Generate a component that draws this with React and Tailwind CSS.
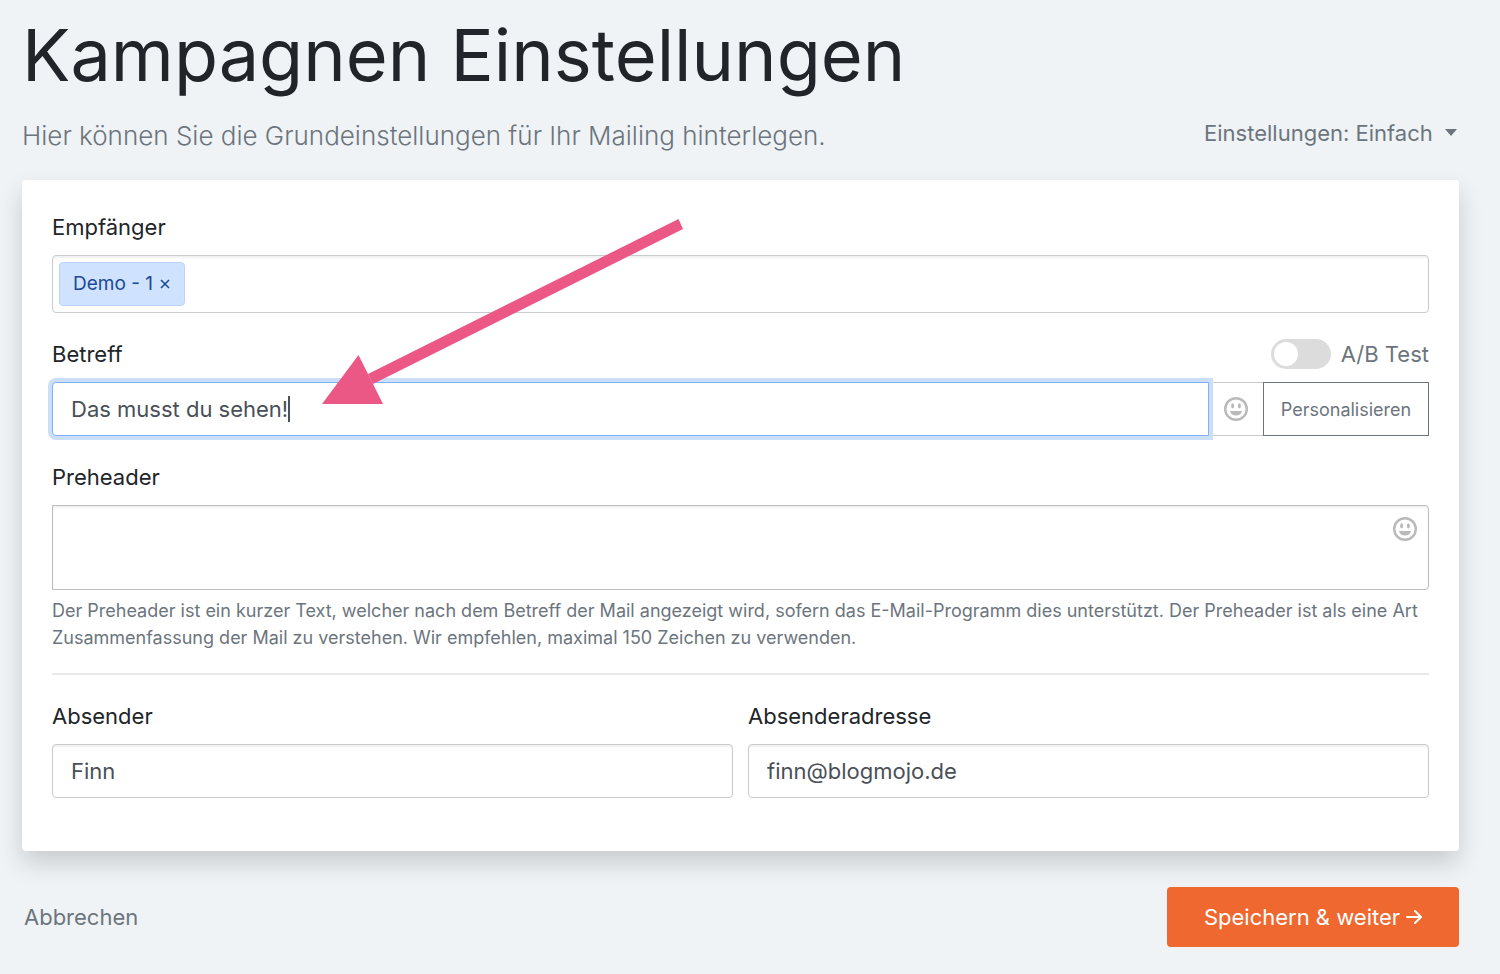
import { useState } from 'react';

const inputClass =
  'block w-full h-[54px] rounded-[4px] border border-[#c9cbce] bg-white px-[18px] text-[22px] text-[#495057] shadow-[inset_0_2px_2px_rgba(0,0,0,0.06)] outline-none';
const labelClass = 'block text-[22px] leading-[34px] text-[#212529]';

function Smiley() {
  return (
    <svg viewBox="0 0 24 24" className="w-6 h-6" fill="none" aria-hidden="true">
      <circle cx="12" cy="12" r="10.8" stroke="#b9b9b9" strokeWidth="2.4" />
      <ellipse cx="8.6" cy="8.8" rx="1.5" ry="2.6" fill="#b9b9b9" />
      <ellipse cx="15.4" cy="8.8" rx="1.5" ry="2.6" fill="#b9b9b9" />
      <path d="M6 14h12c-.6 2.900-3 4.600-6 4.600S6.600 16.900 6 14z" fill="#b9b9b9" />
    </svg>
  );
}

function Arrow() {
  return (
    <svg viewBox="0 0 362 187" className="absolute left-[300px] top-[38px] z-20 w-[362px] h-[187px] pointer-events-none" fill="#eb5886" aria-hidden="true">
      <polygon points="356.5,1 361,11 51,166 46,156" />
      <polygon points="0,186 36.5,137 61,186" />
    </svg>
  );
}

export default function App() {
  const [subject, setSubject] = useState('Das musst du sehen!');
  const [preheader, setPreheader] = useState('');
  const [abTest, setAbTest] = useState(false);

  return (
    <div className="min-h-screen bg-[#eff3f6] pt-[6px] pb-[27px] pl-[22px] pr-[41px] font-['Inter',sans-serif]">
      <h1 className="text-[72px] leading-[98px] font-normal text-[#212529]">Kampagnen Einstellungen</h1>

      <div className="flex items-start justify-between mt-3 mb-6">
        <p className="text-[26px] leading-10 font-light text-[#6c757d]">
          Hier können Sie die Grundeinstellungen für Ihr Mailing hinterlegen.
        </p>
        <div className="relative">
          <select aria-label="Einstellungen" className="appearance-none bg-transparent pr-[26px] text-[22px] leading-[34px] text-[#6c757d] outline-none">
            <option>Einstellungen: Einfach</option>
          </select>
          <svg viewBox="0 0 12 7" className="absolute right-[2px] top-[13px] w-3 h-[7px] pointer-events-none" fill="#6c757d" aria-hidden="true">
            <path d="M0 0h12L6 7z" />
          </svg>
        </div>
      </div>

      <form>
        <div className="relative rounded-[4px] bg-white px-[30px] pt-[30px] pb-[53px] shadow-[0_12px_24px_rgba(0,0,0,0.16)]">
          {/* Recipients */}
          <div className="mb-6">
            <label htmlFor="recipients" className={labelClass}>Empfänger</label>
            <div className="mt-[11px] flex h-[58px] items-center rounded-[4px] border border-[#c9cbce] px-[6px] shadow-[inset_0_2px_2px_rgba(0,0,0,0.06)]">
              <span className="flex h-11 items-center gap-[6px] rounded-[4px] border border-[#b8d4fb] bg-[#cfe2ff] px-[13px] text-[19px] text-[#1b4a94]">
                Demo - 1
                <button type="button" aria-label="Demo - 1 entfernen">
                  <svg viewBox="0 0 12 12" className="w-3 h-3" stroke="#1b4a94" strokeWidth="1.6" aria-hidden="true">
                    <path d="M2 2l8 8M10 2l-8 8" />
                  </svg>
                </button>
              </span>
              <input id="recipients" type="text" className="flex-1 min-w-0 px-2 text-[22px] outline-none" />
            </div>
          </div>

          {/* Subject */}
          <div className="mb-6">
            <div className="flex items-center justify-between">
              <label htmlFor="subject" className={labelClass}>Betreff</label>
              <div className="flex items-center gap-[10px]">
                <input
                  id="abtest"
                  type="checkbox"
                  role="switch"
                  checked={abTest}
                  onChange={(e) => setAbTest(e.target.checked)}
                  className="appearance-none w-[60px] h-[30px] rounded-full bg-[#dcdcdc] p-[3px] before:block before:w-6 before:h-6 before:rounded-full before:bg-white checked:bg-[#ee682f] checked:before:ml-[30px]"
                />
                <label htmlFor="abtest" className="text-[22px] leading-[34px] text-[#6c757d]">A/B Test</label>
              </div>
            </div>
            <div className="mt-[11px] flex h-[54px]">
              <div className="relative flex-1 z-10">
                <input
                  id="subject"
                  type="text"
                  value={subject}
                  onChange={(e) => setSubject(e.target.value)}
                  className="block w-full h-full rounded-l-[4px] border border-[#80b3f5] bg-white px-[18px] text-[22px] text-[#495057] outline-none ring-4 ring-[#cbdff9]"
                />
                {/* Text cursor */}
                <div className="absolute left-[236px] top-[14px] w-[2px] h-[26px] bg-[#495057]"></div>
              </div>
              <button type="button" aria-label="Emoji" className="flex w-[54px] items-center justify-center border-y border-[#c9cbce]">
                <Smiley />
              </button>
              <button type="button" className="w-[166px] border border-[#6c757d] text-[18px] text-[#6c757d]">
                Personalisieren
              </button>
            </div>
          </div>

          {/* Preheader */}
          <div>
            <label htmlFor="preheader" className={labelClass}>Preheader</label>
            <div className="relative mt-[11px]">
              <textarea
                id="preheader"
                value={preheader}
                onChange={(e) => setPreheader(e.target.value)}
                className="block w-full h-[85px] resize-none rounded-r-[4px] border border-[#b9bbbe] bg-white px-[18px] py-2 text-[22px] text-[#495057] shadow-[inset_0_2px_2px_rgba(0,0,0,0.06)] outline-none"
              />
              <button type="button" aria-label="Emoji" className="absolute right-3 top-3">
                <Smiley />
              </button>
            </div>
            <p className="mt-[7px] text-[18px] leading-[27px] text-[#6c757d]">
              Der Preheader ist ein kurzer Text, welcher nach dem Betreff der Mail angezeigt wird, sofern das E-Mail-Programm dies unterstützt. Der Preheader ist als eine Art Zusammenfassung der Mail zu verstehen. Wir empfehlen, maximal 150 Zeichen zu verwenden.
            </p>
          </div>

          <hr className="mt-[22px] mb-6 border-t-2 border-[#e8e9ea]" />

          {/* Sender */}
          <div className="grid grid-cols-2 gap-[15px]">
            <div>
              <label htmlFor="sender" className={labelClass}>Absender</label>
              <input id="sender" type="text" defaultValue="Finn" className={`${inputClass} mt-[11px]`} />
            </div>
            <div>
              <label htmlFor="address" className={labelClass}>Absenderadresse</label>
              <input id="address" type="email" defaultValue="finn@blogmojo.de" className={`${inputClass} mt-[11px]`} />
            </div>
          </div>

          <Arrow />
        </div>

        <div className="mt-9 flex items-center justify-between">
          <a href="#" className="px-[2px] text-[22px] leading-[34px] text-[#6c757d]">Abbrechen</a>
          <button type="submit" className="flex h-[60px] w-[292px] items-center justify-center gap-[6px] rounded-[4px] bg-[#ee682f] text-[22px] text-white">
            Speichern &amp; weiter
            <svg viewBox="0 0 16 16" className="w-4 h-4" fill="none" stroke="currentColor" strokeWidth="2" strokeLinecap="round" strokeLinejoin="round" aria-hidden="true">
              <path d="M1 8h14M9 2l6 6-6 6" />
            </svg>
          </button>
        </div>
      </form>
    </div>
  );
}
